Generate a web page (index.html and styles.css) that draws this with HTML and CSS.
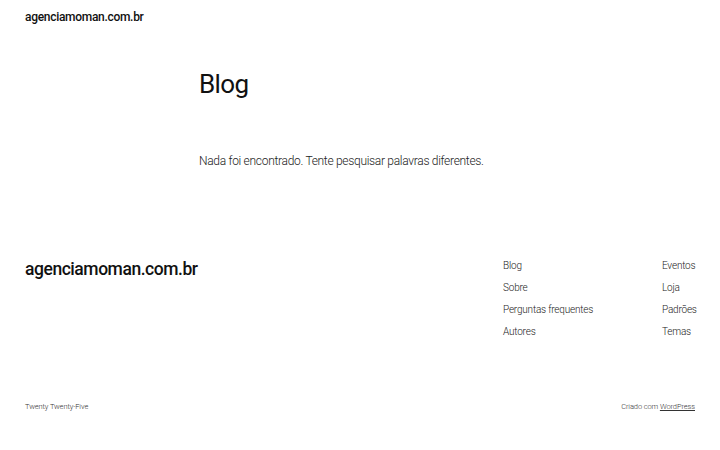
FILE: index.html
```html
<!DOCTYPE html>
<html lang="pt-BR">
<head>
    <meta charset="UTF-8">
    <meta name="viewport" content="width=device-width, initial-scale=1.0">
    <title>Blog – agenciamoman.com.br</title>
    <link rel="stylesheet" href="styles.css">
</head>
<body>
    <header class="site-header">
        <a class="site-title" href="#">agenciamoman.com.br</a>
    </header>

    <main class="site-main">
        <h1 class="page-title">Blog</h1>
        <p class="no-results">Nada foi encontrado. Tente pesquisar palavras diferentes.</p>
    </main>

    <footer class="site-footer">
        <div class="footer-top">
            <a class="footer-title" href="#">agenciamoman.com.br</a>
            <nav class="footer-nav">
                <ul class="nav-col">
                    <li><a href="#">Blog</a></li>
                    <li><a href="#">Sobre</a></li>
                    <li><a href="#">Perguntas frequentes</a></li>
                    <li><a href="#">Autores</a></li>
                </ul>
                <ul class="nav-col">
                    <li><a href="#">Eventos</a></li>
                    <li><a href="#">Loja</a></li>
                    <li><a href="#">Padrões</a></li>
                    <li><a href="#">Temas</a></li>
                </ul>
            </nav>
        </div>
        <div class="footer-bottom">
            <span>Twenty Twenty-Five</span>
            <span>Criado com <a class="credit" href="#">WordPress</a></span>
        </div>
    </footer>
</body>
</html>
```

FILE: styles.css
```css
body {
    margin: 0;
    background: #fff;
    color: #111;
    font-family: "Roboto", "Noto Sans", sans-serif;
    -webkit-font-smoothing: antialiased;
}

a {
    color: inherit;
    text-decoration: none;
}

.site-header {
    padding: 0 25px;
    height: 34px;
    display: flex;
    align-items: center;
}

.site-title {
    font-size: 12px;
    font-weight: 500;
    letter-spacing: -0.3px;
}

.site-main {
    width: 322px;
    margin: 0 auto;
    padding-top: 32px;
    height: 171px;
}

.page-title {
    margin: 0;
    font-size: 26px;
    font-weight: 400;
    letter-spacing: -0.6px;
    line-height: 36px;
}

.no-results {
    margin: 51px 0 0;
    font-size: 12px;
    line-height: 16px;
    font-weight: 300;
    color: #222;
    letter-spacing: -0.3px;
    white-space: nowrap;
}

.site-footer {
    padding: 0 25px;
}

.footer-top {
    display: flex;
    justify-content: space-between;
    align-items: flex-start;
}

.footer-title {
    font-size: 17.5px;
    font-weight: 500;
    letter-spacing: -0.45px;
    line-height: 24px;
    margin-top: 20px;
}

.footer-nav {
    display: flex;
    gap: 70px;
    margin-top: 22px;
}

.nav-col {
    list-style: none;
    margin: 0;
    padding: 0;
    display: flex;
    flex-direction: column;
    gap: 8px;
    font-size: 10px;
    font-weight: 300;
    letter-spacing: -0.2px;
    line-height: 14px;
    color: #222;
    white-space: nowrap;
}

.nav-col:first-child {
    width: 89px;
}

.nav-col:last-child {
    width: 33px;
}

.footer-bottom {
    display: flex;
    justify-content: space-between;
    margin-top: 63px;
    font-size: 7.5px;
    font-weight: 300;
    color: #333;
    letter-spacing: -0.1px;
}

.credit {
    text-decoration: underline;
}
```
